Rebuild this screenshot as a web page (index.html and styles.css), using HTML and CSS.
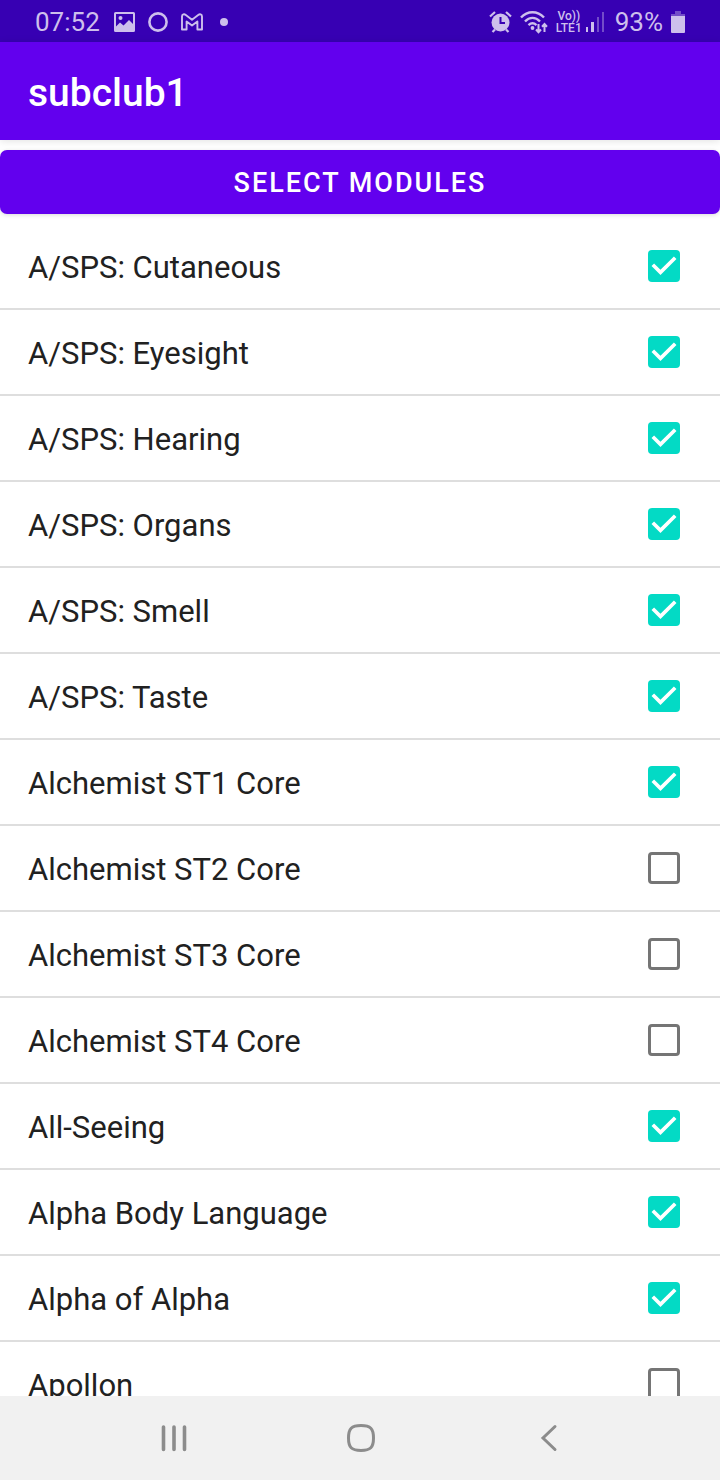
FILE: index.html
```html
<!DOCTYPE html>
<html lang="en">
<head>
    <meta charset="UTF-8">
    <meta name="viewport" content="width=device-width, initial-scale=1.0">
    <title>subclub1</title>
    <link rel="stylesheet" href="styles.css">
</head>
<body>
    <!-- Status bar -->
    <div class="status-bar">
        <div class="status-left">
            <span class="clock">07:52</span>
            <svg width="22" height="20" viewBox="0 0 22 20">
                <path fill="currentColor" fill-rule="evenodd" d="M2.500 0h18A1.500 1.500 0 0 1 22 1.500v17a1.500 1.500 0 0 1-1.500 1.500h-18A1.500 1.500 0 0 1 1 18.500v-17A1.500 1.500 0 0 1 2.500 0zM3 2v12.500l4-4 3.500 3L16 8l4 4V2z"/>
                <circle cx="7.500" cy="6" r="2" fill="currentColor"/>
            </svg>
            <svg width="20" height="20" viewBox="0 0 20 20">
                <circle cx="10" cy="10" r="8.600" fill="none" stroke="currentColor" stroke-width="2.600"/>
            </svg>
            <svg width="22" height="18" viewBox="0 0 22 18">
                <path d="M1 3.500C1 1.200 3.200.8 4.800 2L11 6.800 17.200 2C18.800.8 21 1.200 21 3.500V16.500h-4.600V8.500L11 12.600 5.600 8.500v8H1z" fill="none" stroke="currentColor" stroke-width="1.900" stroke-linejoin="round"/>
            </svg>
            <span class="dot"></span>
        </div>
        <div class="status-right">
            <svg width="23" height="22" viewBox="0 0 23 22">
                <path d="M1 5.500L6 1M22 5.500L17 1M6 18.500L3.500 21M17 18.500l2.500 2.500" fill="none" stroke="currentColor" stroke-width="2.200"/>
                <circle cx="11.500" cy="11.500" r="9" fill="currentColor"/>
                <path class="cutout" d="M11.500 6v6H16"/>
            </svg>
            <svg class="wifi" width="28" height="24" viewBox="0 0 28 24">
                <path d="M1 7.500C7.500.5 17.500.5 24 7.500M5 11.500c4.500-4.800 10.500-4.800 15 0M8.500 15.200c2.500-2.300 5.500-2.300 8 0" fill="none" stroke="currentColor" stroke-width="2.400"/>
                <circle cx="12.500" cy="18" r="1.900" fill="currentColor"/>
                <path d="M18.500 14v8M16 19.500l2.500 2.700 2.500-2.700M24.500 22v-8M22 16.700l2.500-2.700 2.500 2.700" fill="none" stroke="currentColor" stroke-width="2"/>
            </svg>
            <span class="volte"><span>Vo))</span><span>LTE1</span></span>
            <svg class="signal" width="19" height="20" viewBox="0 0 19 20">
                <path d="M0 15h2v5H0zM5 10h3v10H5z" fill="currentColor"/>
                <path d="M11 5h2v15h-2zM16 0h2v20h-2z" fill="currentColor" opacity=".4"/>
            </svg>
            <span class="clock">93%</span>
            <svg class="battery" width="14" height="22" viewBox="0 0 14 22">
                <path d="M4 0h6v3h4v2H0V3h4z" fill="currentColor" opacity=".4"/>
                <path d="M0 5h14v16a1 1 0 0 1-1 1H1a1 1 0 0 1-1-1z" fill="currentColor"/>
            </svg>
        </div>
    </div>

    <header class="app-bar">
        <h1>subclub1</h1>
    </header>

    <main class="content">
        <button class="btn" type="button">SELECT MODULES</button>

        <!-- Module list -->
        <div class="module-list">
            <label class="module"><span>A/SPS: Cutaneous</span><input type="checkbox" checked></label>
            <label class="module"><span>A/SPS: Eyesight</span><input type="checkbox" checked></label>
            <label class="module"><span>A/SPS: Hearing</span><input type="checkbox" checked></label>
            <label class="module"><span>A/SPS: Organs</span><input type="checkbox" checked></label>
            <label class="module"><span>A/SPS: Smell</span><input type="checkbox" checked></label>
            <label class="module"><span>A/SPS: Taste</span><input type="checkbox" checked></label>
            <label class="module"><span>Alchemist ST1 Core</span><input type="checkbox" checked></label>
            <label class="module"><span>Alchemist ST2 Core</span><input type="checkbox"></label>
            <label class="module"><span>Alchemist ST3 Core</span><input type="checkbox"></label>
            <label class="module"><span>Alchemist ST4 Core</span><input type="checkbox"></label>
            <label class="module"><span>All-Seeing</span><input type="checkbox" checked></label>
            <label class="module"><span>Alpha Body Language</span><input type="checkbox" checked></label>
            <label class="module"><span>Alpha of Alpha</span><input type="checkbox" checked></label>
            <label class="module"><span>Apollon</span><input type="checkbox"></label>
        </div>
    </main>

    <!-- System navigation -->
    <nav class="nav-bar">
        <button type="button" aria-label="Recent apps">
            <svg width="30" height="30" viewBox="0 0 30 30">
                <path d="M4.500 4v22.500M15 4v22.500M25.500 4v22.500" fill="none" stroke="currentColor" stroke-width="3.600" stroke-linecap="round"/>
            </svg>
        </button>
        <button type="button" aria-label="Home">
            <svg width="30" height="30" viewBox="0 0 30 30">
                <path d="M15 2.500c9.500 0 12.500 3 12.500 12.500s-3 12.500-12.500 12.500S2.500 24.500 2.500 15 5.500 2.500 15 2.500z" fill="none" stroke="currentColor" stroke-width="3"/>
            </svg>
        </button>
        <button type="button" aria-label="Back">
            <svg width="30" height="30" viewBox="0 0 30 30">
                <path d="M22 3.500L10 15l12 11.500" fill="none" stroke="currentColor" stroke-width="3" stroke-linecap="round"/>
            </svg>
        </button>
    </nav>
</body>
</html>
```

FILE: styles.css
```css
* {
    box-sizing: border-box;
}
body {
    font-family: Roboto, sans-serif;
    margin: 0;
    height: 100vh;
    display: flex;
    flex-direction: column;
    overflow: hidden;
    background: #fff;
    color: #212121;
}
svg {
    display: block;
    flex: none;
}
.status-bar {
    flex: none;
    height: 42px;
    padding: 2px 35px 0;
    display: flex;
    justify-content: space-between;
    align-items: center;
    background: #3700b3;
    color: #cdbfec;
}
.status-left, .status-right {
    display: flex;
    align-items: center;
}
.status-left {
    gap: 13px;
}
.status-right {
    gap: 8px;
}
.clock {
    font-size: 26px;
    line-height: 40px;
}
.dot {
    width: 8px;
    height: 8px;
    margin-left: 4px;
    border-radius: 50%;
    background: currentColor;
}
.cutout {
    fill: none;
    stroke: #3700b3;
    stroke-width: 2;
}
.volte {
    display: flex;
    flex-direction: column;
    align-items: center;
    margin-right: -4px;
    font-size: 12px;
    font-weight: 500;
    line-height: 12px;
}
.signal {
    margin-right: 2px;
}
.app-bar {
    flex: none;
    height: 98px;
    padding: 4px 28px 0;
    display: flex;
    align-items: center;
    background: #6200ee;
    color: #fff;
    box-shadow: 0 1px 8px rgba(0, 0, 0, 0.12);
}
h1 {
    margin: 0;
    font-size: 39px;
    font-weight: 500;
}
.content {
    flex: 1;
    min-height: 0;
    padding-top: 10px;
    display: flex;
    flex-direction: column;
    gap: 10px;
    overflow: hidden;
}
.btn {
    flex: none;
    width: 100%;
    height: 64px;
    padding: 2px 0 0;
    border: none;
    border-radius: 7px;
    background: #6200ee;
    color: #fff;
    font-family: inherit;
    font-size: 27px;
    font-weight: 500;
    letter-spacing: 2px;
    box-shadow: 0 1px 4px rgba(0, 0, 0, 0.15);
    cursor: pointer;
}
.module-list {
    flex: 1;
    min-height: 0;
    overflow: hidden;
}
.module {
    height: 86px;
    padding: 0 40px 0 28px;
    display: flex;
    justify-content: space-between;
    align-items: center;
    border-bottom: 2px solid #dedede;
    font-size: 31px;
    cursor: pointer;
}
.module span {
    padding-top: 2px;
}
.module input {
    appearance: none;
    flex: none;
    width: 32px;
    height: 32px;
    margin: 0;
    border: 3px solid #757575;
    border-radius: 4px;
}
.module input:checked {
    border: none;
    background: #03dac5;
}
.module input:checked::before {
    content: "";
    display: block;
    height: 100%;
    background: #fff;
    clip-path: polygon(11% 50%, 19% 42%, 39% 62%, 81% 20%, 89% 28%, 39% 78%);
}
.nav-bar {
    flex: none;
    height: 84px;
    padding: 0 78px 0 80px;
    display: flex;
    background: #f1f1f1;
}
.nav-bar button {
    flex: 1;
    display: flex;
    justify-content: center;
    align-items: center;
    padding: 0;
    border: none;
    background: none;
    color: #8c8c8c;
    cursor: pointer;
}
```
